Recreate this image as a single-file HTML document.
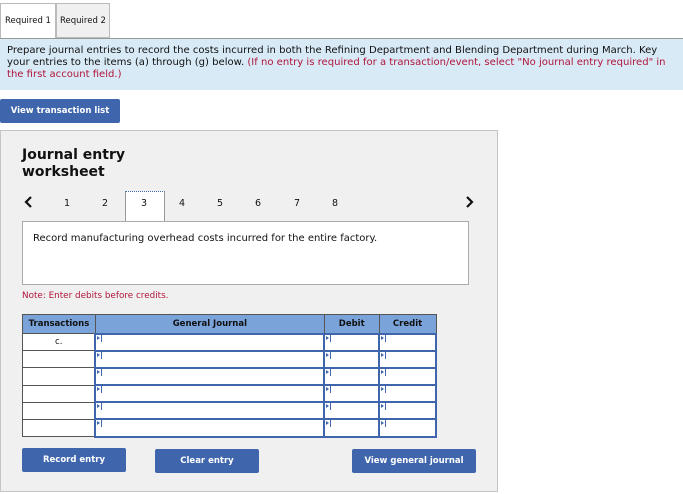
<!DOCTYPE html>
<html><head><style>
*{box-sizing:border-box;margin:0;padding:0}
body{width:683px;height:494px;background:#fff;font-family:"DejaVu Sans",Verdana,sans-serif;position:relative;overflow:hidden;color:#111}
.a{position:absolute}
.tab{position:absolute;top:3px;height:36px;border:1px solid #bbb;font-size:8.5px;text-align:center;line-height:34px}
.btn{position:absolute;background:#3f66ad;color:#fff;font-weight:bold;font-size:8.5px;text-align:center;border-radius:2px}
table{border-collapse:collapse;position:absolute;left:22px;top:314px;width:415px;font-family:"DejaVu Sans",sans-serif}
td,th{border:1px solid #555;font-size:8.5px;padding:0}
th{background:#7aa3d9;height:19px;font-weight:bold}
td{height:17.2px;background:#fff}
td.i{border:2px solid #3f66ad;position:relative}
td.i:before{content:"";position:absolute;left:1px;top:1px;width:0;height:0;border-left:3px solid #3f66ad;border-top:2px solid transparent;border-bottom:2px solid transparent}
td.i:after{content:"";position:absolute;left:5px;top:0;width:1px;height:7px;background:#3f66ad}
</style></head><body>
<div class="tab" style="left:0;width:56px;background:#fff;border-bottom:none;height:37px">Required 1</div>
<div class="tab" style="left:56px;width:54px;background:#f0f0f0;height:35px">Required 2</div>
<div class="a" style="left:0;top:38px;width:683px;height:1px;background:#999"></div>
<div class="a" style="left:0;top:39px;width:683px;height:51px;background:#d9eaf7;font-size:10.05px;line-height:12px;padding:6px 7px">Prepare journal entries to record the costs incurred in both the Refining Department and Blending Department during March. Key your entries to the items (a) through (g) below. <span style="color:#b0163a">(If no entry is required for a transaction/event, select "No journal entry required" in the first account field.)</span></div>
<div class="btn" style="left:0;top:99px;width:120px;height:24px;line-height:24px">View transaction list</div>
<div class="a" style="left:0;top:130px;width:498px;height:362px;background:#f0f0f0;border:1px solid #c4c4c4"></div>
<div class="a" style="left:22px;top:147px;font-size:14px;font-weight:bold;line-height:17px">Journal entry<br>worksheet</div>
<svg class="a" style="left:24px;top:196px" width="10" height="12"><path d="M7 1 L2 6 L7 11" stroke="#111" stroke-width="2.2" fill="none"/></svg>
<svg class="a" style="left:464px;top:196px" width="10" height="12"><path d="M3 1 L8 6 L3 11" stroke="#111" stroke-width="2.2" fill="none"/></svg>
<div class="a" style="left:125px;top:191px;width:40px;height:31px;background:#fff;border:1px solid #999;border-top:1px dotted #3f66ad;border-bottom:none"></div>
<div class="a" style="top:198px;left:0;font-size:9.5px">
<span class="a" style="left:64px">1</span><span class="a" style="left:102px">2</span><span class="a" style="left:141px">3</span><span class="a" style="left:179px">4</span><span class="a" style="left:217px">5</span><span class="a" style="left:255px">6</span><span class="a" style="left:294px">7</span><span class="a" style="left:332px">8</span></div>
<div class="a" style="left:22px;top:221px;width:447px;height:64px;background:#fff;border:1px solid #aaa;font-size:10px;padding:11px 10px">Record manufacturing overhead costs incurred for the entire factory.</div>
<div class="a" style="left:22px;top:291px;font-size:8.8px;color:#b0163a">Note: Enter debits before credits.</div>
<table>
<tr><th style="width:73px">Transactions</th><th style="width:230px">General Journal</th><th style="width:55px">Debit</th><th style="width:57px">Credit</th></tr>
<tr><td style="text-align:center">c.</td><td class="i"></td><td class="i"></td><td class="i"></td></tr>
<tr><td></td><td class="i"></td><td class="i"></td><td class="i"></td></tr>
<tr><td></td><td class="i"></td><td class="i"></td><td class="i"></td></tr>
<tr><td></td><td class="i"></td><td class="i"></td><td class="i"></td></tr>
<tr><td></td><td class="i"></td><td class="i"></td><td class="i"></td></tr>
<tr><td></td><td class="i"></td><td class="i"></td><td class="i"></td></tr>
</table>
<div class="btn" style="left:22px;top:448px;width:104px;height:24px;line-height:24px">Record entry</div>
<div class="btn" style="left:155px;top:449px;width:104px;height:24px;line-height:24px">Clear entry</div>
<div class="btn" style="left:352px;top:449px;width:124px;height:24px;line-height:24px">View general journal</div>
</body></html>
